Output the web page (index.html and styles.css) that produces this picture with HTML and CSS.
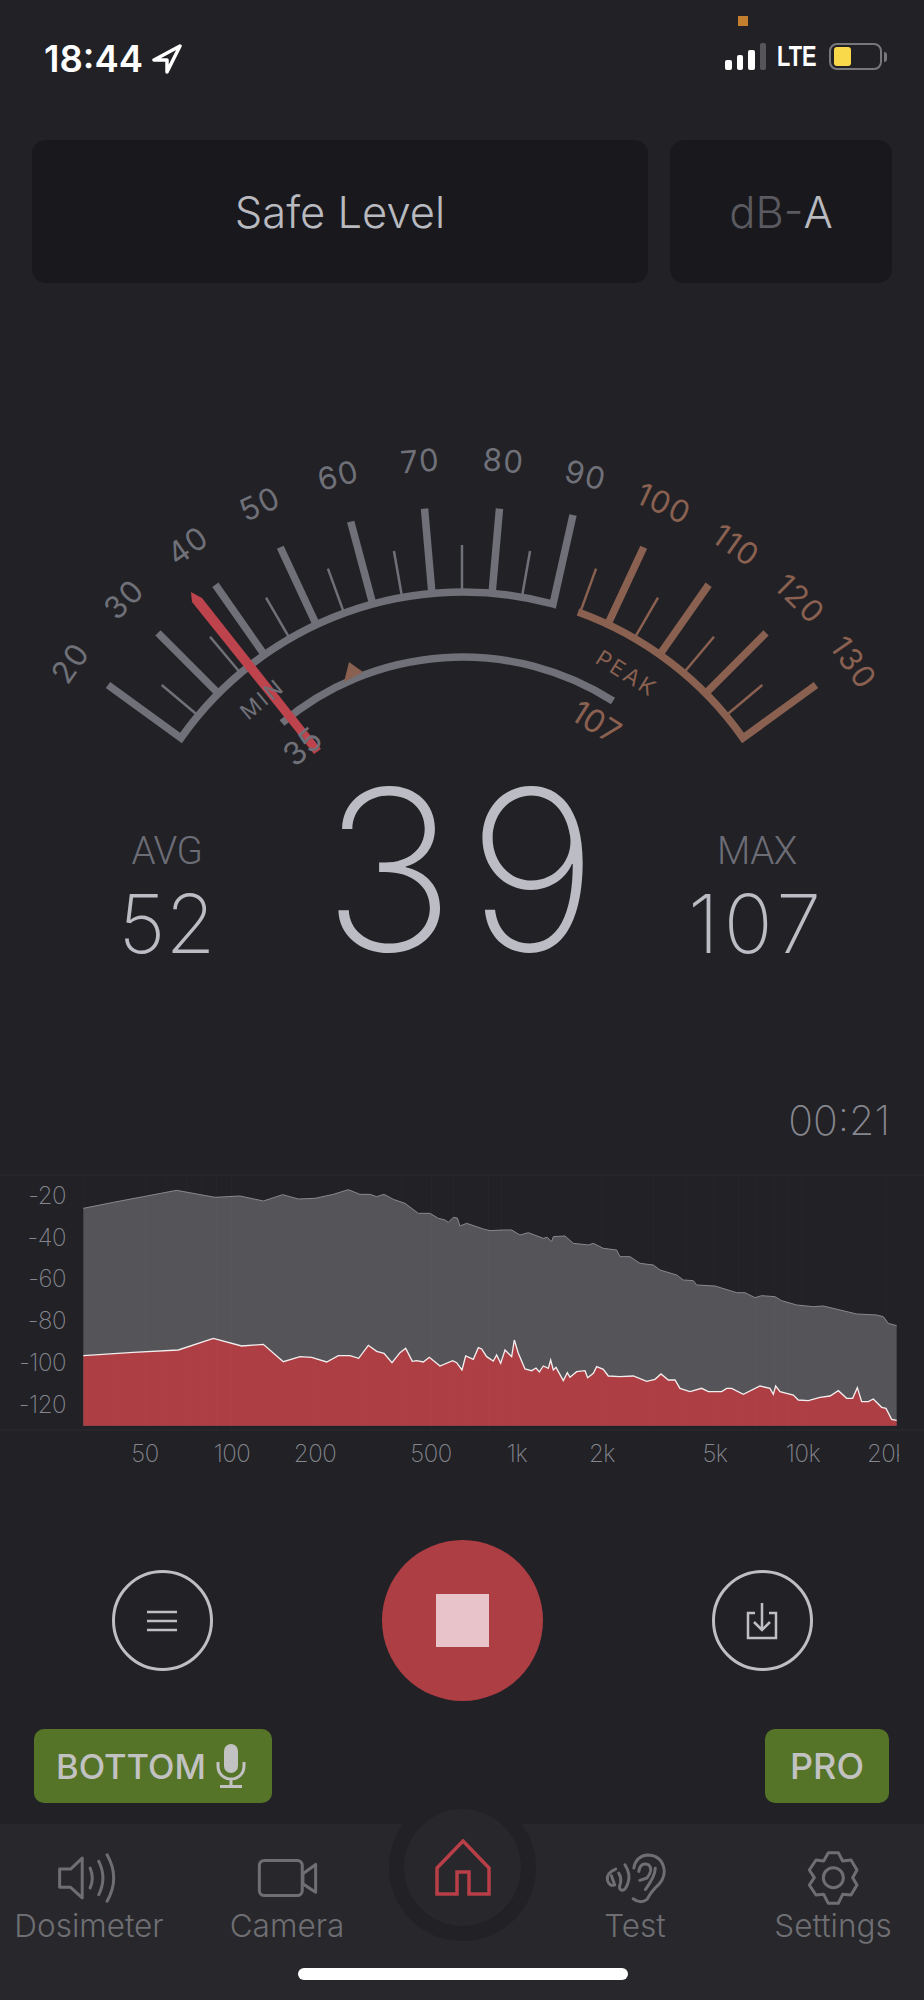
FILE: index.html

```html
<!DOCTYPE html>
<html lang="en">
<head>
  <meta charset="UTF-8">
  <title>Sound Meter</title>
  <link rel="stylesheet" href="styles.css">
</head>
<body>

<span class="mic-dot"></span>

<div class="status">
  <div class="status-left">
    <span class="time">18:44</span>
    <svg class="loc" viewBox="0 0 30 30"><path d="M28 2 L2 16 L15 16 L15 28 Z"/></svg>
  </div>
  <div class="status-right">
    <div class="signal"><i class="b1"></i><i class="b2"></i><i class="b3"></i><i class="b4"></i></div>
    <span class="lte">LTE</span>
    <div class="battery"><i></i></div>
    <span class="nub"></span>
  </div>
</div>

<div class="panels">
  <div class="panel panel-wide">Safe Level</div>
  <div class="panel panel-small"><span class="dim">dB-</span>A</div>
</div>

<svg class="gauge" viewBox="0 430 924 355">
  <!-- grey scale -->
  <path class="scale" d="M108 685 L181 738 A345 345 0 0 1 553 604 L573 515"/>
  <line class="major" x1="462" y1="592" x2="462" y2="507" transform="rotate(-45 462 937)"/>
  <line class="major" x1="462" y1="592" x2="462" y2="507" transform="rotate(-35 462 937)"/>
  <line class="major" x1="462" y1="592" x2="462" y2="507" transform="rotate(-25 462 937)"/>
  <line class="major" x1="462" y1="592" x2="462" y2="507" transform="rotate(-15 462 937)"/>
  <line class="major" x1="462" y1="592" x2="462" y2="507" transform="rotate(-5 462 937)"/>
  <line class="major" x1="462" y1="592" x2="462" y2="507" transform="rotate(5 462 937)"/>
  <line class="minor" x1="462" y1="592" x2="462" y2="545" transform="rotate(-50 462 937)"/>
  <line class="minor" x1="462" y1="592" x2="462" y2="545" transform="rotate(-40 462 937)"/>
  <line class="minor" x1="462" y1="592" x2="462" y2="545" transform="rotate(-30 462 937)"/>
  <line class="minor" x1="462" y1="592" x2="462" y2="545" transform="rotate(-20 462 937)"/>
  <line class="minor" x1="462" y1="592" x2="462" y2="545" transform="rotate(-10 462 937)"/>
  <line class="minor" x1="462" y1="592" x2="462" y2="545"/>
  <line class="minor" x1="462" y1="592" x2="462" y2="545" transform="rotate(10 462 937)"/>

  <!-- peak scale -->
  <path class="scale hot" d="M578 612 A345 345 0 0 1 743 738 L816 685"/>
  <line class="major hot" x1="462" y1="592" x2="462" y2="507" transform="rotate(25 462 937)"/>
  <line class="major hot" x1="462" y1="592" x2="462" y2="507" transform="rotate(35 462 937)"/>
  <line class="major hot" x1="462" y1="592" x2="462" y2="507" transform="rotate(45 462 937)"/>
  <line class="minor hot" x1="462" y1="592" x2="462" y2="545" transform="rotate(20 462 937)"/>
  <line class="minor hot" x1="462" y1="592" x2="462" y2="545" transform="rotate(30 462 937)"/>
  <line class="minor hot" x1="462" y1="592" x2="462" y2="545" transform="rotate(40 462 937)"/>
  <line class="minor hot" x1="462" y1="592" x2="462" y2="545" transform="rotate(50 462 937)"/>

  <text class="num" x="462" y="470" transform="rotate(-55 462 937)">20</text>
  <text class="num" x="462" y="470" transform="rotate(-45 462 937)">30</text>
  <text class="num" x="462" y="470" transform="rotate(-35 462 937)">40</text>
  <text class="num" x="462" y="470" transform="rotate(-25 462 937)">50</text>
  <text class="num" x="462" y="470" transform="rotate(-15 462 937)">60</text>
  <text class="num" x="462" y="470" transform="rotate(-5 462 937)">70</text>
  <text class="num" x="462" y="470" transform="rotate(5 462 937)">80</text>
  <text class="num" x="462" y="470" transform="rotate(15 462 937)">90</text>
  <text class="num hot-text" x="462" y="470" transform="rotate(25 462 937)">100</text>
  <text class="num hot-text" x="462" y="470" transform="rotate(35 462 937)">110</text>
  <text class="num hot-text" x="462" y="470" transform="rotate(45 462 937)">120</text>
  <text class="num hot-text" x="462" y="470" transform="rotate(55 462 937)">130</text>

  <!-- min / max arc -->
  <path class="range" d="M282 723 A280 280 0 0 1 613 701"/>
  <polygon class="marker" points="344,682 349,662 363,672"/>

  <polygon class="needle" points="191,592 202,598 321,749 314,754 192,602"/>

  <text class="tag" x="462" y="634" transform="rotate(-40 462 937)">MIN</text>
  <text class="tag hot-text" x="462" y="634" transform="rotate(32 462 937)">PEAK</text>
  <text class="val" x="462" y="700" transform="rotate(-40 462 937)">35</text>
  <text class="val hot-text" x="462" y="695" transform="rotate(32 462 937)">107</text>
</svg>

<div class="readout">
  <div class="side">
    <div class="side-label">AVG</div>
    <div class="side-value">52</div>
  </div>
  <div class="big">39</div>
  <div class="side">
    <div class="side-label">MAX</div>
    <div class="side-value side-wide">107</div>
  </div>
</div>

<div class="timer">00:21</div>

<svg class="chart" viewBox="0 1160 924 320">
  <defs>
    <clipPath id="axisclip"><rect x="0" y="1160" width="899" height="320"/></clipPath>
  </defs>
  <g transform="translate(0 1160) scale(0.33333)">
    <polygon class="env" points="250,145 340,127 430,110 530,91 645,112 720,108 790,123 848,104 895,117 945,115 1000,103 1045,89 1080,103 1110,103 1130,110 1152,103 1180,118 1215,130 1255,160 1290,160 1315,175 1335,180 1345,187 1360,172 1372,174 1380,198 1400,190 1450,207 1470,212 1510,210 1535,210 1560,225 1585,218 1630,235 1642,232 1655,245 1660,230 1695,228 1720,250 1765,255 1780,250 1810,265 1850,270 1860,290 1890,290 1920,310 1960,315 1980,330 2030,345 2050,360 2080,362 2090,375 2145,378 2210,398 2235,398 2265,413 2285,407 2325,410 2345,422 2390,435 2440,440 2470,438 2570,462 2630,465 2650,470 2665,490 2690,497 2690,797 250,797"/>
    <polyline class="env-line" points="250,145 340,127 430,110 530,91 645,112 720,108 790,123 848,104 895,117 945,115 1000,103 1045,89 1080,103 1110,103 1130,110 1152,103 1180,118 1215,130 1255,160 1290,160 1315,175 1335,180 1345,187 1360,172 1372,174 1380,198 1400,190 1450,207 1470,212 1510,210 1535,210 1560,225 1585,218 1630,235 1642,232 1655,245 1660,230 1695,228 1720,250 1765,255 1780,250 1810,265 1850,270 1860,290 1890,290 1920,310 1960,315 1980,330 2030,345 2050,360 2080,362 2090,375 2145,378 2210,398 2235,398 2265,413 2285,407 2325,410 2345,422 2390,435 2440,440 2470,438 2570,462 2630,465 2650,470 2665,490 2690,497"/>
    <polygon class="level" points="250,587 400,577 535,570 640,535 725,558 790,553 850,605 900,590 935,592 980,606 1015,587 1050,587 1076,595 1105,556 1130,574 1152,580 1176,608 1200,578 1217,565 1237,604 1250,602 1270,606 1288,592 1320,618 1358,602 1370,608 1386,630 1397,588 1420,598 1435,563 1445,567 1460,590 1480,603 1490,585 1502,610 1515,570 1535,590 1543,540 1555,580 1575,627 1595,632 1608,624 1618,636 1630,618 1645,625 1652,600 1660,630 1668,622 1690,662 1702,638 1710,652 1730,635 1755,632 1763,653 1780,640 1790,620 1810,628 1825,648 1860,650 1900,648 1940,664 1965,658 1983,642 2005,660 2025,660 2040,685 2070,695 2105,685 2125,695 2165,695 2180,685 2195,685 2230,703 2280,678 2310,685 2320,703 2327,678 2340,695 2380,705 2395,720 2425,722 2460,712 2490,708 2515,692 2540,715 2558,715 2572,683 2585,725 2605,725 2620,717 2645,742 2658,745 2675,778 2690,781 2690,797 250,797"/>
    <polyline class="level-line" points="250,587 400,577 535,570 640,535 725,558 790,553 850,605 900,590 935,592 980,606 1015,587 1050,587 1076,595 1105,556 1130,574 1152,580 1176,608 1200,578 1217,565 1237,604 1250,602 1270,606 1288,592 1320,618 1358,602 1370,608 1386,630 1397,588 1420,598 1435,563 1445,567 1460,590 1480,603 1490,585 1502,610 1515,570 1535,590 1543,540 1555,580 1575,627 1595,632 1608,624 1618,636 1630,618 1645,625 1652,600 1660,630 1668,622 1690,662 1702,638 1710,652 1730,635 1755,632 1763,653 1780,640 1790,620 1810,628 1825,648 1860,650 1900,648 1940,664 1965,658 1983,642 2005,660 2025,660 2040,685 2070,695 2105,685 2125,695 2165,695 2180,685 2195,685 2230,703 2280,678 2310,685 2320,703 2327,678 2340,695 2380,705 2395,720 2425,722 2460,712 2490,708 2515,692 2540,715 2558,715 2572,683 2585,725 2605,725 2620,717 2645,742 2658,745 2675,778 2690,781"/>
    <path class="grid" d="M250 45V810M345 45V810M435 45V810M500 45V810M560 45V810M605 45V810M650 45V810M695 45V810M945 45V810M1095 45V810M1205 45V810M1295 45V810M1360 45V810M1410 45V810M1465 45V810M1505 45V810M1545 45V810M1805 45V810M1960 45V810M2060 45V810M2140 45V810M2215 45V810M2270 45V810M2325 45V810M2365 45V810M2405 45V810M2660 45V810"/>
    <path class="rule" d="M0 45H2772M0 810H2772"/>
  </g>
  <g class="y-axis">
    <text x="66" y="1204">-20</text>
    <text x="66" y="1246">-40</text>
    <text x="66" y="1287">-60</text>
    <text x="66" y="1329">-80</text>
    <text x="66" y="1371">-100</text>
    <text x="66" y="1413">-120</text>
  </g>
  <g class="x-axis" clip-path="url(#axisclip)">
    <text x="145" y="1462">50</text>
    <text x="232" y="1462">100</text>
    <text x="315" y="1462">200</text>
    <text x="431" y="1462">500</text>
    <text x="517" y="1462">1k</text>
    <text x="602" y="1462">2k</text>
    <text x="715" y="1462">5k</text>
    <text x="803" y="1462">10k</text>
    <text x="887" y="1462">20k</text>
  </g>
</svg>

<div class="controls">
  <button class="round">
    <svg viewBox="0 0 32 22" width="32" height="22"><path d="M1 2H31M1 11H31M1 20H31"/></svg>
  </button>
  <button class="stop"><i></i></button>
  <button class="round">
    <svg viewBox="0 0 32 38" width="32" height="38"><path d="M9 11H2V36H30V11H23M16 1V28M8 20L16 28L24 20"/></svg>
  </button>
</div>

<div class="badges">
  <div class="badge">BOTTOM
    <svg class="mic" viewBox="0 0 30 44" width="30" height="44">
      <rect class="mic-head" x="8" y="0" width="14" height="29" rx="7"/>
      <path d="M2 18V22C2 30 8 35 15 35C22 35 28 30 28 22V18M15 35V42M4 42.500H26"/>
    </svg>
  </div>
  <div class="badge badge-pro">PRO</div>
</div>

<div class="tabbar">
  <div class="home-ring"><div class="home-disc">
    <svg viewBox="0 0 56 58" width="56" height="58"><path d="M28 2 L54 29 V55 H34 V33 H22 V55 H2 V29 Z"/></svg>
  </div></div>

  <div class="tab">
    <svg viewBox="30 40 190 150" width="63" height="50">
      <path d="M35 88H68L103 55V175L68 143H35Z"/>
      <path d="M127 85Q140 115 127 145M153 65Q178 115 153 165M178 45Q218 115 178 185"/>
    </svg>
    <span>Dosimeter</span>
  </div>
  <div class="tab">
    <svg viewBox="625 55 182 115" width="61" height="38">
      <rect x="632" y="60" width="128" height="105" rx="15"/>
      <path d="M762 100L800 72V155L762 130Z"/>
    </svg>
    <span>Camera</span>
  </div>
  <div class="tab tab-empty"></div>
  <div class="tab">
    <svg viewBox="40 30 190 170" width="63" height="56">
      <path d="M128 178Q150 195 170 180Q180 160 195 145Q225 120 222 90Q215 45 170 45Q135 50 130 85"/>
      <path d="M148 122L170 115Q190 90 175 75Q150 65 145 95M165 150Q195 110 195 85"/>
      <path d="M103 75Q122 105 112 130Q104 156 92 152Q82 148 90 128Q92 112 84 100"/>
      <path d="M75 88Q45 100 50 122Q56 142 72 136Q66 120 62 108"/>
    </svg>
    <span>Test</span>
  </div>
  <div class="tab">
    <svg viewBox="655 25 165 168" width="55" height="56">
      <path d="M722 33H752L765 58L790 55L808 85L795 108L808 130L790 160L765 158L752 185H722L708 158L685 160L665 130L680 108L665 85L685 55L708 58Z"/>
      <circle cx="737" cy="108" r="30"/>
    </svg>
    <span>Settings</span>
  </div>
  <div class="home-bar"></div>
</div>

</body>
</html>
```

FILE: styles.css

```css
* {
  box-sizing: border-box;
}
body {
  margin: 0;
  width: 924px;
  height: 2000px;
  overflow: hidden;
  position: relative;
  background-color: #212126;
  font-family: 'Inter', sans-serif;
  color: #bcbdc4;
}

/* status bar */
.mic-dot {
  position: absolute;
  left: 738px;
  top: 16px;
  width: 10px;
  height: 10px;
  background-color: #c47f2e;
}
.status {
  height: 140px;
  padding: 38px 32px 0 44px;
  display: flex;
  justify-content: space-between;
  align-items: flex-start;
}
.status-left {
  display: flex;
  align-items: center;
  gap: 9px;
}
.time {
  font-size: 36.500px;
  font-weight: 600;
  line-height: 42px;
  color: #fff;
}
.loc {
  width: 30px;
  height: 30px;
}
.loc path {
  fill: none;
  stroke: #fff;
  stroke-width: 3.5;
  stroke-linejoin: round;
}
.status-right {
  display: flex;
  align-items: flex-end;
  height: 32px;
  padding-top: 5px;
  margin-right: 5px;
}
.signal {
  display: flex;
  align-items: flex-end;
  gap: 5px;
  height: 27px;
}
.signal i {
  width: 6.500px;
  border-radius: 2px;
  background-color: #fff;
}
.signal .b1 { height: 10px; }
.signal .b2 { height: 15px; }
.signal .b3 { height: 20px; }
.signal .b4 { height: 27px; background-color: #55555a; }
.lte {
  display: block;
  width: 41px;
  margin-left: 11px;
  font-family: 'Liberation Sans', sans-serif;
  font-size: 29px;
  font-weight: 700;
  line-height: 27px;
  color: #fff;
  white-space: nowrap;
  transform: scaleX(0.75);
  transform-origin: 0 50%;
}
.battery {
  margin-left: 11px;
  width: 53px;
  height: 27px;
  border: 2px solid #77777c;
  border-radius: 8px;
  padding: 2px 3px;
}
.battery i {
  display: block;
  width: 17px;
  height: 19px;
  background-color: #f9d949;
  border-radius: 3px;
}
.nub {
  width: 3px;
  height: 10px;
  margin: 0 0 8px 2px;
  background-color: #77777c;
  border-radius: 0 3px 3px 0;
}

/* level panels */
.panels {
  display: flex;
  gap: 22px;
  padding: 0 32px;
}
.panel {
  height: 143px;
  border-radius: 14px;
  background-color: #19191d;
  display: flex;
  align-items: center;
  justify-content: center;
  font-size: 43.500px;
  font-weight: 300;
  color: #b9bac0;
}
.panel-wide {
  width: 616px;
}
.panel-small {
  width: 222px;
}
.dim {
  color: #5a5a60;
}

/* gauge */
.gauge {
  display: block;
  width: 924px;
  height: 355px;
  margin-top: 147px;
}
.scale {
  fill: none;
  stroke: #6f7078;
  stroke-width: 7.5;
  stroke-linejoin: miter;
  stroke-miterlimit: 8;
}
.major {
  stroke: #6f7078;
  stroke-width: 7.5;
}
.minor {
  stroke: #6f7078;
  stroke-width: 2.5;
}
.scale.hot,
.major.hot,
.minor.hot {
  stroke: #8a6050;
}
.num {
  font-size: 31px;
  fill: #6f7078;
  text-anchor: middle;
  letter-spacing: 1.500px;
}
.tag {
  font-size: 22px;
  fill: #6f7078;
  text-anchor: middle;
  letter-spacing: 2.500px;
}
.val {
  font-size: 32px;
  fill: #6f7078;
  text-anchor: middle;
}
.num.hot-text,
.tag.hot-text,
.val.hot-text {
  fill: #8a6050;
}
.range {
  fill: none;
  stroke: #6f7078;
  stroke-width: 7.5;
}
.marker {
  fill: #8a6050;
}
.needle {
  fill: #bd434c;
}

/* readings */
.readout {
  display: grid;
  grid-template-columns: 334px 256px 334px;
  height: 190px;
}
.side {
  text-align: center;
  padding-top: 46px;
}
.side-label {
  font-family: 'Roboto', sans-serif;
  font-weight: 300;
  font-size: 38.500px;
  line-height: 40px;
  letter-spacing: -0.5px;
  color: #6c6d76;
}
.side-value {
  font-weight: 200;
  font-size: 81px;
  line-height: 84px;
  margin-top: 11px;
  color: #bcbdc4;
}
.side-wide {
  letter-spacing: 5px;
}
.big {
  font-weight: 170;
  font-size: 224px;
  line-height: 170px;
  letter-spacing: 12px;
  text-align: center;
  white-space: nowrap;
  margin: 0 -20px 0 -12px;
  color: #bcbdc4;
}
.timer {
  height: 185px;
  padding: 125px 34px 0 0;
  text-align: right;
  font-weight: 200;
  font-size: 41px;
  line-height: 40px;
  color: #85868e;
}

/* spectrum */
.chart {
  display: block;
  width: 924px;
  height: 320px;
}
.env {
  fill: #545459;
}
.env-line {
  fill: none;
  stroke: #88888e;
  stroke-width: 3;
}
.level {
  fill: #ad3e44;
}
.level-line {
  fill: none;
  stroke: #f2eeee;
  stroke-width: 4;
}
.grid {
  stroke: rgba(255, 255, 255, 0.025);
  stroke-width: 3;
}
.rule {
  stroke: #2c2c31;
  stroke-width: 3;
}
.y-axis text,
.x-axis text {
  font-weight: 200;
  font-size: 24px;
  letter-spacing: -0.5px;
  fill: #85868e;
}
.y-axis text {
  text-anchor: end;
}
.x-axis text {
  text-anchor: middle;
}

/* buttons */
.controls {
  margin-top: 60px;
  height: 161px;
  display: grid;
  grid-template-columns: 324px 276px 324px;
  justify-items: center;
  align-items: center;
}
.round {
  width: 101px;
  height: 101px;
  padding: 0;
  border: 3px solid #bfbfc3;
  border-radius: 50%;
  background: none;
  display: flex;
  align-items: center;
  justify-content: center;
}
.round path {
  fill: none;
  stroke: #bfbfc3;
  stroke-width: 2.5;
}
.stop {
  width: 161px;
  height: 161px;
  padding: 0;
  border: none;
  border-radius: 50%;
  background-color: #ad3e44;
  display: flex;
  align-items: center;
  justify-content: center;
}
.stop i {
  display: block;
  width: 53px;
  height: 53px;
  background-color: #e8c3c9;
}
.badges {
  margin-top: 28px;
  padding: 0 35px 0 34px;
  display: flex;
  justify-content: space-between;
}
.badge {
  height: 74px;
  padding: 0 26px 0 22px;
  border-radius: 10px;
  background-color: #567428;
  display: flex;
  align-items: center;
  gap: 10px;
  font-size: 34.500px;
  font-weight: 500;
  color: #c2c2c2;
}
.badge-pro {
  padding: 0 25px;
  font-size: 36px;
}
.mic path {
  fill: none;
  stroke: #c2c2c2;
  stroke-width: 3;
}
.mic-head {
  fill: #c2c2c2;
}

/* tab bar */
.tabbar {
  position: relative;
  margin-top: 21px;
  height: 176px;
  padding-top: 26px;
  background-color: #27272c;
  display: grid;
  grid-template-columns: 178px 218px 132px 214px 182px;
}
.tab {
  display: flex;
  flex-direction: column;
  align-items: center;
  font-size: 31.500px;
  font-weight: 300;
  color: #6f6f73;
}
.tab svg {
  height: 56px;
  margin-bottom: 2px;
}
.tab svg * {
  fill: none;
  stroke: #6f6f73;
  stroke-width: 9;
  stroke-linejoin: round;
  stroke-linecap: round;
}
.tab span {
  line-height: 36px;
}
.home-ring {
  position: absolute;
  left: 389px;
  top: -30px;
  width: 147px;
  height: 147px;
  border-radius: 50%;
  background-color: #212126;
  display: flex;
  align-items: center;
  justify-content: center;
}
.home-disc {
  width: 117px;
  height: 117px;
  border-radius: 50%;
  background-color: #27272c;
  display: flex;
  align-items: center;
  justify-content: center;
}
.home-disc path {
  fill: none;
  stroke: #b83f48;
  stroke-width: 3.500;
}
.home-bar {
  position: absolute;
  left: 298px;
  top: 144px;
  width: 330px;
  height: 12px;
  border-radius: 6px;
  background-color: #fff;
}
```
